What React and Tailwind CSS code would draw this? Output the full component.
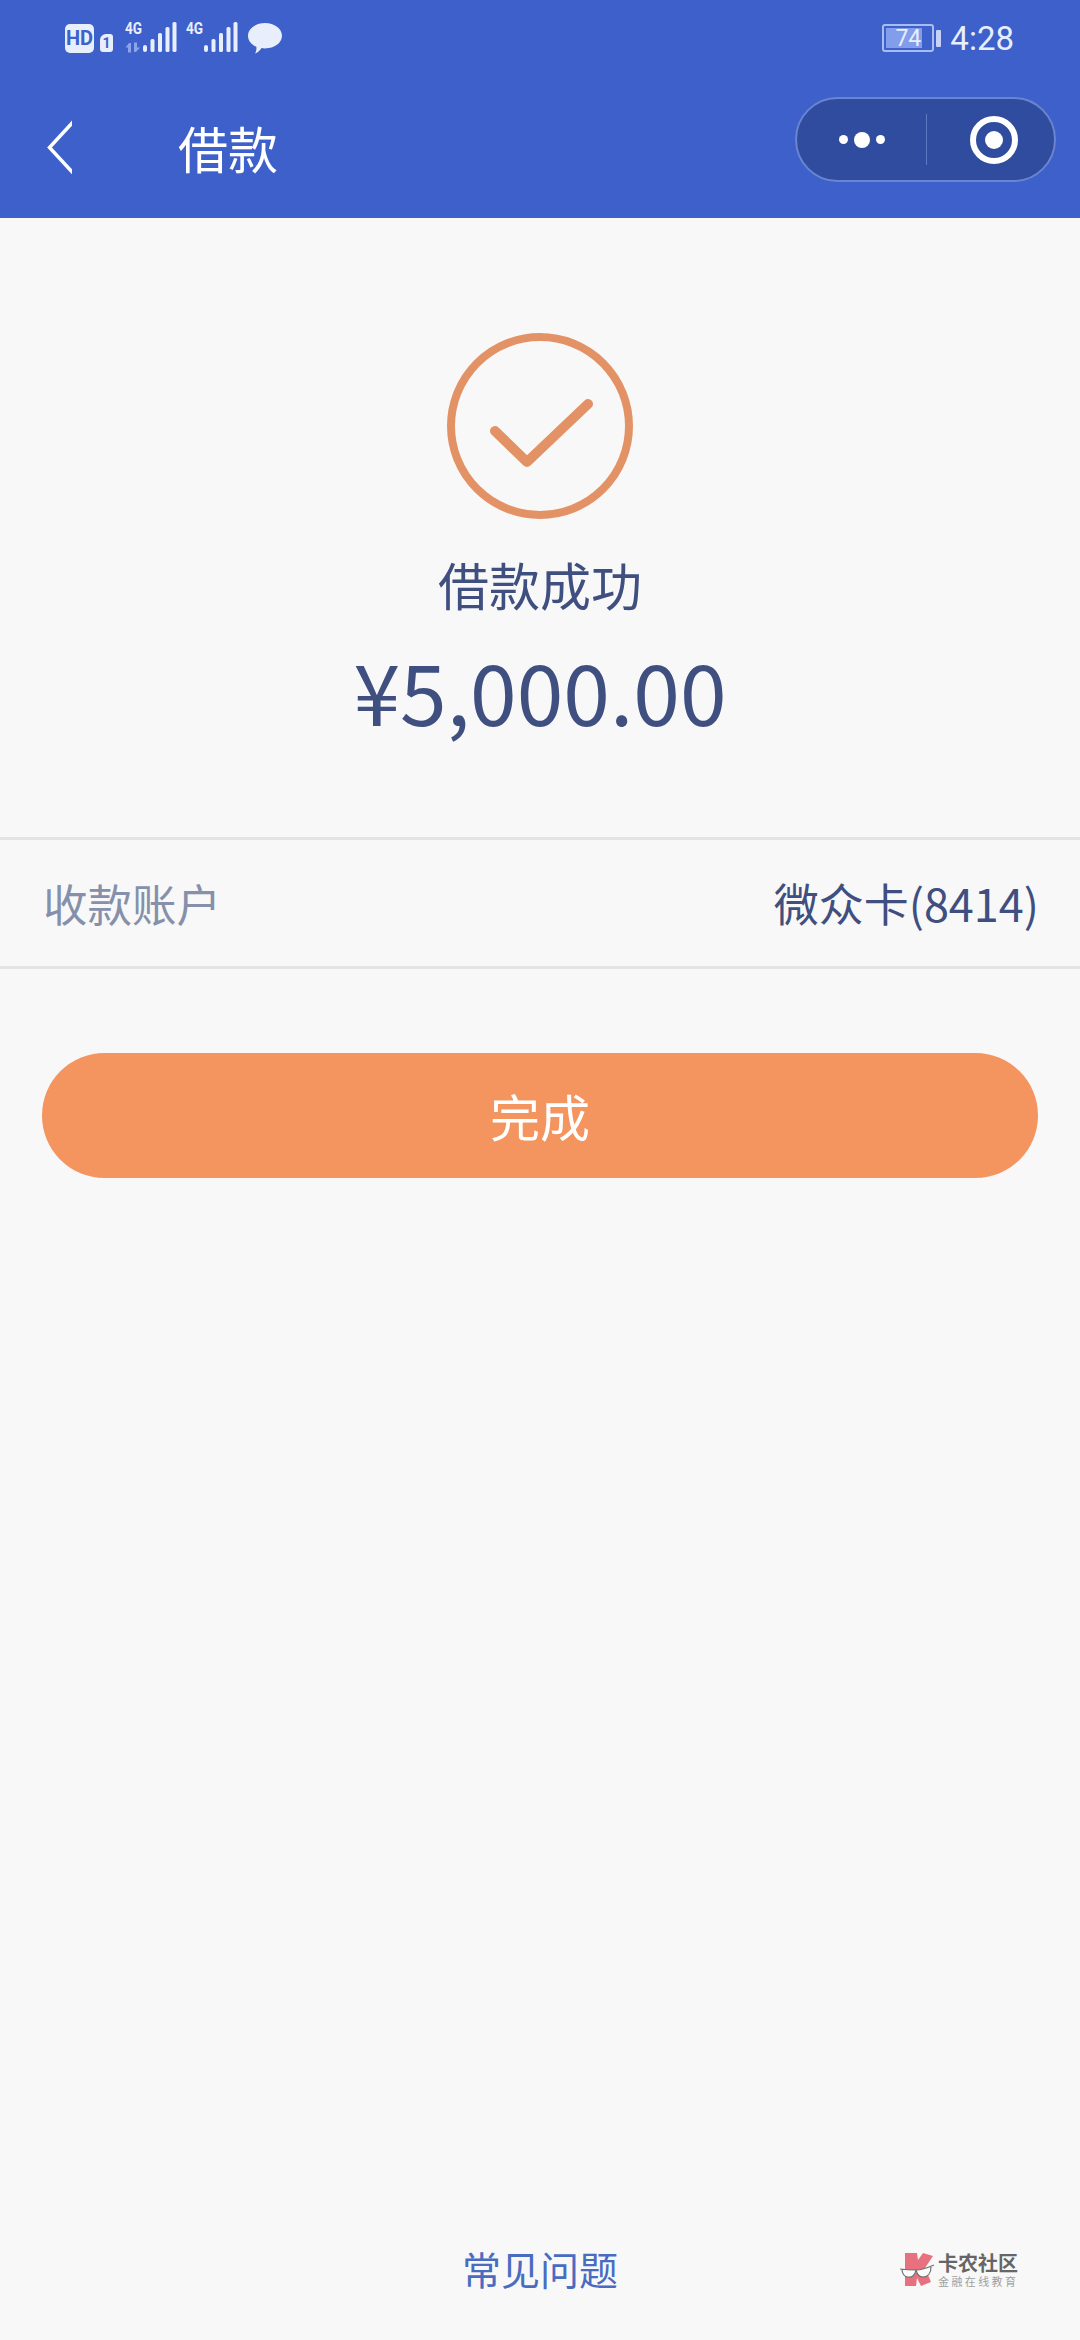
import React from 'react';

const cjk = "font-['Noto_Sans_CJK_SC','Noto_Sans',sans-serif]";

// 4G label + signal bars
const Signal = ({ arrows }) => (
  <div className="relative w-[52px] h-[32px] shrink-0">
    <span className="absolute left-0 top-[-2px] text-[17px] leading-[17px] font-bold text-[#e8eefc] font-['Roboto',sans-serif] scale-x-[0.8] origin-left">4G</span>
    {arrows && (
      <svg className="absolute left-0 top-[20px]" width="17" height="11" viewBox="0 0 17 11">
        <path d="M4 1 L0.5 5.5 H3 V10.5 H6 V1 Z M11 10 L15 5.5 H12 V0.5 H9 V10 Z" fill="#8ba3ea" />
      </svg>
    )}
    <svg className="absolute left-[18px] top-0" width="34" height="32" viewBox="0 0 34 32">
      <rect x="0" y="23" width="4" height="7" rx="2" fill="#e8eefc" />
      <rect x="7.5" y="17" width="4" height="13" rx="1.5" fill="#e8eefc" />
      <rect x="15" y="11" width="4" height="19" rx="1.5" fill="#e8eefc" />
      <rect x="22.5" y="5" width="4" height="25" rx="1.5" fill="#e8eefc" />
      <rect x="29.5" y="0" width="4" height="30" rx="1.5" fill="#e8eefc" />
    </svg>
  </div>
);

const StatusBar = () => (
  <div className="h-[76px] flex items-center justify-between pl-[65px] pr-[66px]">
    <div className="flex items-center">
      <div className="w-[29px] h-[29px] rounded-[5px] bg-[#e8eefc] flex items-center justify-center text-[20px] leading-none font-bold text-[#3d60cb] font-['Roboto',sans-serif]">HD</div>
      <div className="ml-[6px] mt-[9px] w-[13px] h-[18px] rounded-[3px] rounded-tl-[6px] bg-[#e8eefc] flex items-center justify-center text-[14px] leading-none font-bold text-[#3d60cb] font-['Roboto',sans-serif]">1</div>
      <div className="ml-[12px]"><Signal arrows /></div>
      <div className="ml-[9px]"><Signal /></div>
      <svg className="ml-[10px]" width="34" height="31" viewBox="0 0 34 31">
        <path d="M17 0 C26.4 0 34 5.6 34 12.8 C34 20 26.4 25.4 17 25.4 C15.6 25.4 14.6 25.3 13.6 25.1 C12 27.6 9.4 30 7 30.6 C8.2 28.4 8.6 26 8.4 23.8 C3.2 21.6 0 17.6 0 12.8 C0 5.6 7.6 0 17 0 Z" fill="#e8eefc" />
      </svg>
    </div>
    <div className="flex items-center">
      <div className="relative w-[52px] h-[28px] rounded-[3px] border-2 border-[#a9bcf0] p-[2px]">
        <div className="w-[36px] h-full bg-[#829deb]" />
        <span className="absolute inset-0 flex items-center justify-center text-[23px] leading-none text-[#e8eefc] font-['Roboto',sans-serif]">74</span>
      </div>
      <div className="ml-[2px] w-[5px] h-[17px] rounded-[1px] bg-[#c6d3f6]" />
      <span className="ml-[9px] text-[33px] leading-none text-[#e8eefc] font-['Roboto',sans-serif]">4:28</span>
    </div>
  </div>
);

const Capsule = () => (
  <div className="w-[261px] h-[85px] rounded-full bg-[#304c9f] border-2 border-[#6a84cf] flex items-center">
    <div className="w-[129px] flex items-center justify-center gap-[6px]">
      <div className="w-[9px] h-[9px] rounded-full bg-white" />
      <div className="w-[16px] h-[16px] rounded-full bg-white" />
      <div className="w-[9px] h-[9px] rounded-full bg-white" />
    </div>
    <div className="w-px h-[51px] bg-[#5f79c4]" />
    <div className="flex-1 flex items-center justify-center pl-[6px]">
      <svg width="48" height="48" viewBox="0 0 48 48">
        <circle cx="24" cy="24" r="21" fill="none" stroke="white" strokeWidth="6" />
        <circle cx="24" cy="24" r="9" fill="white" />
      </svg>
    </div>
  </div>
);

const Header = () => (
  <header className="bg-[#3d60cb] h-[218px] shrink-0">
    <StatusBar />
    <div className="h-[142px] flex items-start pl-[46px] pr-[24px]">
      <svg className="mt-[44px]" width="26" height="54" viewBox="0 0 26 54">
        <path d="M28 1 L3.5 27.5 L28 54" fill="none" stroke="white" strokeWidth="3.5" />
      </svg>
      <h1 className={`ml-[106px] mt-[42px] text-[50px] leading-[58px] font-normal text-white ${cjk}`}>借款</h1>
      <div className="ml-auto mt-[21px]"><Capsule /></div>
    </div>
  </header>
);

const SuccessIcon = () => (
  <svg width="188" height="188" viewBox="0 0 188 188">
    <circle cx="94" cy="94" r="89" fill="none" stroke="#e39265" strokeWidth="8" />
    <path d="M49 99 L81 130 L142 72" fill="none" stroke="#e39265" strokeWidth="10" strokeLinejoin="round" strokeLinecap="round" />
  </svg>
);

// watermark in the bottom corner
const Watermark = () => (
  <div className="absolute left-[900px] top-[2252px] flex items-center">
    <svg width="36" height="36" viewBox="0 0 36 36">
      <path d="M5 1 H17 L18 8 L23 1 L33 4 L25 16 L31 30 L21 34 L17 26 L16 34 H5 Z" fill="#e8717f" />
      <path d="M2 17 C7 18 12 18 16 18 C21 18 26 16 31 15 C31 21 28 25 23 25 C19 25 17 22 16 19 C15 23 12 26 8 25 C4 25 2 21 2 17 Z" fill="#fbfbfb" />
      <path d="M0 17 C7 18 12 18 16 18 C21 18 27 16 34 13 M2 17 C2 21 4 25 8 25 C12 26 15 23 16 18 C17 22 19 25 23 25 C28 25 31 21 31 15" fill="none" stroke="#707070" strokeWidth="1.2" />
    </svg>
    <div className="ml-[2px] flex flex-col">
      <span className={`text-[20px] leading-[22px] font-bold text-[#666666] ${cjk}`}>卡农社区</span>
      <span className={`text-[11px] leading-[14px] tracking-[2.4px] text-[#a0a0a0] ${cjk}`}>金融在线教育</span>
    </div>
  </div>
);

export default function App() {
  return (
    <div className={`relative w-[1080px] h-[2340px] flex flex-col bg-[#f8f8f8] overflow-hidden ${cjk}`}>
      <Header />
      <main className="flex-1 flex flex-col">
        <div className="flex flex-col items-center pt-[114px]">
          <SuccessIcon />
          <p className="mt-[28px] text-[51px] leading-[72px] text-[#3f4f80]">借款成功</p>
          <p className="mt-[15px] text-[84px] leading-[110px] text-[#3f4f80]">¥5,000.00</p>
        </div>
        <div className="mt-[92px] h-[132px] border-y-[3px] border-[#e4e4e4] flex items-center justify-between pl-[43px] pr-[41px]">
          <span className="text-[44.5px] leading-[60px] text-[#8690ab]">收款账户</span>
          <span className="text-[45px] leading-[60px] text-[#3f4f80]">微众卡(8414)</span>
        </div>
        <div className="px-[42px] mt-[84px]">
          <button className="w-full h-[125px] rounded-full bg-[#f4945f] text-[50px] text-white">完成</button>
        </div>
        <div className="mt-auto pb-[44px] text-center text-[39px] leading-[56px] text-[#4a6cc0]">常见问题</div>
      </main>
      <Watermark />
    </div>
  );
}
